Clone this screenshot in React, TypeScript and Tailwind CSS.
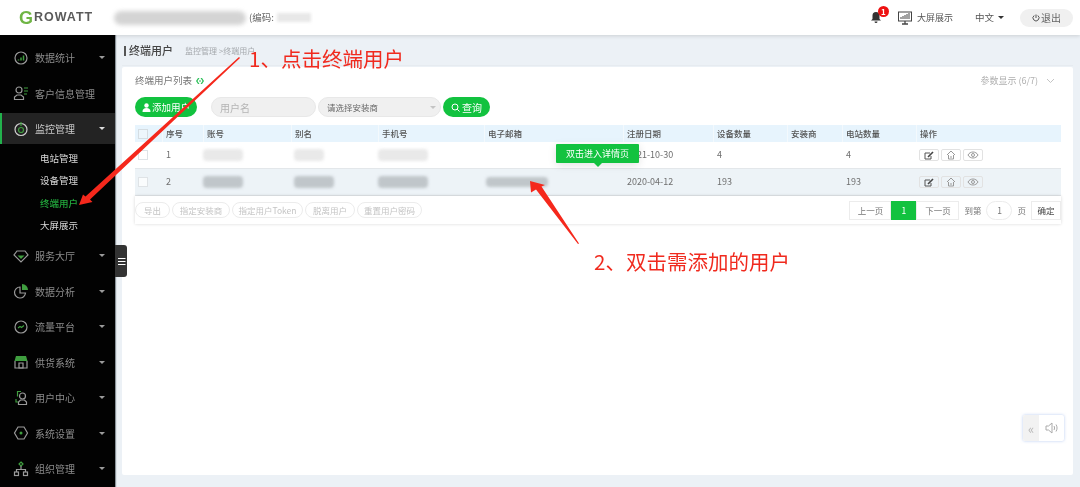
import React from "react";

const G = "#3f9e3f";
const C = "#9a9a9a";

function Icon({ name }: { name: string }) {
  const common = { width: 16, height: 16, viewBox: "0 0 16 16", fill: "none", strokeWidth: 1.2 } as const;
  switch (name) {
    case "stat":
      return <svg {...common}><circle cx="8" cy="8" r="6" stroke={C} /><path d="M5.5 10.5v-1M8 10.5V7.5M10.500 10.5V5.500" stroke={G} strokeWidth="1.500" /></svg>;
    case "cust":
      return <svg {...common}><circle cx="6" cy="5" r="3" stroke={C} /><path d="M1.500 14.500v-2.500l2.500-2h4l2.500 2v2.500z" stroke={C} /><path d="M11 3h4M11 6h4M11 9h3" stroke={G} /></svg>;
    case "mon":
      return <svg {...common}><circle cx="8" cy="8.500" r="6" stroke="#d0d0d0" /><circle cx="8" cy="9" r="2.500" stroke={G} /><path d="M8 1v4" stroke={G} /></svg>;
    case "gem":
      return <svg {...common}><path d="M4 3h8l3 4-7 7-7-7z" stroke={C} /><path d="M4.500 7.500h7L8 11z" fill={G} /></svg>;
    case "pie":
      return <svg {...common}><path d="M7 4a5.500 5.500 0 1 0 5.500 6H7z" stroke={C} /><path d="M9 1a6 6 0 0 1 6 6H9z" fill={G} /></svg>;
    case "flow":
      return <svg {...common}><circle cx="8" cy="8" r="6" stroke={C} /><path d="M5 9l2-1.500 1.500 1L11 6.500" stroke={G} /></svg>;
    case "shop":
      return <svg {...common}><path d="M2 7v7h12V7" stroke={C} /><path d="M3 2h10l1.500 5h-13z" fill={G} /><path d="M6 9h4v5H6z" stroke={C} /></svg>;
    case "user":
      return <svg {...common}><circle cx="9.500" cy="6" r="3" stroke={C} /><path d="M5.500 14.500v-2.500l2-2h4l2 2v2.500z" stroke={C} /><path d="M8 1.500H4.500v5M3 9v3h2" stroke={G} /></svg>;
    case "set":
      return <svg {...common}><path d="M5 2h6l3.500 6-3.500 6H5L1.500 8z" stroke={C} /><circle cx="8" cy="8" r="1.500" fill={G} /></svg>;
    default:
      return <svg {...common}><path d="M8 1l2 2-2 2-2-2z" stroke={G} /><path d="M8 5v3M3.500 11V8.500h9V11" stroke={C} /><rect x="1.500" y="11" width="4" height="3.500" stroke={C} /><rect x="10.500" y="11" width="4" height="3.500" stroke={C} /></svg>;
  }
}

function Caret({ color = "#9a9a9a" }: { color?: string }) {
  return <span className="h-0 w-0 border-x-[3px] border-t-[3px] border-x-transparent" style={{ borderTopColor: color }} />;
}

function Menu({ icon, label, active }: { icon: string; label: string; active?: boolean }) {
  return (
    <div className={active ? "flex h-[31px] items-center border-l-2 border-[#22b14c] bg-[#232323] pl-[11px] pr-[10px]" : "flex h-[35.500px] items-center pl-[13px] pr-[10px]"}>
      <span className="flex w-[22px] shrink-0"><Icon name={icon} /></span>
      <span className={active ? "flex-1 text-[10px] text-[#c8c8c8]" : "flex-1 text-[10px] text-[#8c8c8c]"}>{label}</span>
      {label !== "客户信息管理" && <Caret color={active ? "#ddd" : "#9a9a9a"} />}
    </div>
  );
}

function Sub({ label, on }: { label: string; on?: boolean }) {
  return <div className={on ? "flex h-[22.300px] items-center pl-[40px] text-[9.500px] font-medium text-[#22a93c]" : "flex h-[22.300px] items-center pl-[40px] text-[9.500px] text-[#d8d8d8]"}>{label}</div>;
}

function Blob({ w, h, dark, x = 0 }: { w: number; h: number; dark?: boolean; x?: number }) {
  return <div className={dark ? "rounded-sm bg-[#c0c6ca] blur-[1.500px]" : "rounded-sm bg-[#e9e9e9] blur-[1.500px]"} style={{ width: w, height: h, marginLeft: x }} />;
}

const cols = "grid grid-cols-[27px_41px_88px_87px_106px_139px_90px_74px_55px_74px_145px]";
const heads = ["序号", "账号", "别名", "手机号", "电子邮箱", "注册日期", "设备数量", "安装商", "电站数量", "操作"];

function ActionIcons() {
  const cls = "flex h-[12px] w-[20px] items-center justify-center rounded-[2px] border border-[#e2e2e2]";
  return (
    <div className="flex gap-[2px] pl-[3px]">
      <span className={cls}><svg width="10" height="9" viewBox="0 0 10 9" fill="none"><path d="M1 2h5M1 2v6h6V5" stroke="#555" /><path d="M4 6l5-5" stroke="#444" strokeWidth="1.600" /></svg></span>
      <span className={cls}><svg width="10" height="10" viewBox="0 0 10 10" fill="none" stroke="#999"><path d="M1 5l4-4 4 4M2.500 5v4h5V5M4 7h2" /></svg></span>
      <span className={cls}><svg width="12" height="8" viewBox="0 0 12 8" fill="none" stroke="#999"><path d="M1 4c2-4 8-4 10 0-2 4-8 4-10 0z" /><circle cx="6" cy="4" r="1.500" /></svg></span>
    </div>
  );
}

function Row({ n, date, dev, st, dark, blobs }: { n: string; date: string; dev: string; st: string; dark?: boolean; blobs: number[] }) {
  return (
    <div className={`${cols} h-[27px] items-center border-b border-[#e3e7ea] text-[9px] text-[#6f6f6f] ${dark ? "bg-[#edf3f7]" : "bg-white"}`}>
      <div className="pl-[3px]"><div className="h-[10px] w-[10px] border border-[#dfe3e6] bg-white/70" /></div>
      <div className="pl-[4px]">{n}</div>
      <div><Blob w={blobs[0]} h={12} dark={dark} /></div>
      <div><Blob w={blobs[1]} h={12} dark={dark} x={3} /></div>
      <div><Blob w={blobs[2]} h={12} dark={dark} /></div>
      <div><Blob w={blobs[3]} h={dark ? 10 : 0} dark={dark} x={2} /></div>
      <div className="pl-[4px]">{date}</div>
      <div className="pl-[4px]">{dev}</div>
      <div />
      <div className="pl-[4px]">{st}</div>
      <ActionIcons />
    </div>
  );
}

function Ghost({ label, w }: { label: string; w: number }) {
  return <span className="flex h-[16px] items-center justify-center rounded-full border border-[#ececec] text-[8.500px] text-[#c4c4c4]" style={{ width: w }}>{label}</span>;
}

function PageBtn({ label, w, on }: { label: string; w: number; on?: boolean }) {
  return <span className={on ? "flex h-[19px] items-center justify-center bg-[#12c23f] text-[8.500px] text-white" : "flex h-[19px] items-center justify-center border border-[#ececec] text-[8.500px] text-[#777]"} style={{ width: w }}>{label}</span>;
}

export default function App() {
  return (
    <div className="relative flex h-[487px] w-[1080px] flex-col overflow-hidden bg-[#ecf1f6] font-['Noto_Sans_CJK_SC','Liberation_Sans',sans-serif] blur-[0.3px]">
      <header className="z-10 flex h-[35px] shrink-0 items-center bg-white pl-[19px] pr-[7px] shadow-[0_1px_4px_rgba(0,0,0,0.14)]">
        <span className="flex w-[95px] items-center font-['Liberation_Sans',sans-serif] font-bold leading-none text-[#5a5a5a]">
          <span className="text-[18px] text-[#6fb544]">G</span>
          <span className="ml-[1px] text-[12.500px] tracking-[1px]">ROWATT</span>
        </span>
        <div className="h-[14px] w-[132px] rounded-full bg-[#d4d4d4] blur-[2px]" />
        <span className="ml-[3px] text-[9.500px] text-[#666]">(编码:</span>
        <div className="ml-[3px] h-[9px] w-[34px] bg-[#e8e8e8] blur-[1.500px]" />
        <div className="flex-1" />
        <span className="relative mr-[17px]">
          <svg width="10" height="11" viewBox="0 0 10 11"><path d="M5 0a3.500 3.500 0 0 0-3.500 3.500V7L0 8.500h10L8.500 7V3.500A3.500 3.500 0 0 0 5 0zM3.500 9.500a1.500 1.500 0 0 0 3 0z" fill="#333" /></svg>
          <span className="absolute -right-[8px] -top-[6px] flex h-[11px] w-[11px] items-center justify-center rounded-full bg-[#ee1111] text-[8px] font-bold leading-none text-white">1</span>
        </span>
        <svg width="14" height="14" viewBox="0 0 14 14" fill="none"><rect x="0.500" y="1" width="13" height="9" stroke="#444" /><path d="M3 8V6M5 8V5M7 8V4M9 8V3M11 8V2" stroke="#444" /><path d="M4 13h6M7 10v3" stroke="#444" strokeWidth="1.300" /></svg>
        <span className="ml-[5px] text-[9px] text-[#555]">大屏展示</span>
        <span className="ml-[22px] mr-[4px] text-[9.500px] text-[#555]">中文</span>
        <Caret color="#333" />
        <span className="ml-[16px] flex h-[18px] w-[53px] items-center justify-center gap-[1px] rounded-full bg-[#f0f0f0] text-[10px] text-[#666]">
          <svg width="8" height="8" viewBox="0 0 8 8" fill="none" stroke="#555"><path d="M2.200 1.500a3 3 0 1 0 3.600 0M4 0.500v3.500" /></svg>
          退出
        </span>
      </header>

      <div className="flex min-h-0 flex-1">
        <aside className="flex w-[115px] shrink-0 flex-col overflow-hidden bg-[#020202] pt-[5px] shadow-[1px_0_1px_#8a9298]">
          <Menu icon="stat" label="数据统计" />
          <Menu icon="cust" label="客户信息管理" />
          <div className="h-[2px]" />
          <Menu icon="mon" label="监控管理" active />
          <div className="h-[3px]" />
          <Sub label="电站管理" />
          <Sub label="设备管理" />
          <Sub label="终端用户" on />
          <Sub label="大屏展示" />
          <div className="h-[2px]" />
          <Menu icon="gem" label="服务大厅" />
          <Menu icon="pie" label="数据分析" />
          <Menu icon="flow" label="流量平台" />
          <Menu icon="shop" label="供货系统" />
          <Menu icon="user" label="用户中心" />
          <Menu icon="set" label="系统设置" />
          <Menu icon="org" label="组织管理" />
        </aside>

        <main className="flex min-w-0 flex-1 flex-col px-[7px]">
          <div className="flex h-[31px] shrink-0 items-center border-b border-[#e6ebf0] pl-[2px] pt-[1px]">
            <span className="mr-[3px] h-[10px] w-[2px] bg-[#555]" />
            <span className="text-[11px] font-medium text-[#444]">终端用户</span>
            <span className="ml-[12px] text-[8px] text-[#a5a9ad]">监控管理 &gt;终端用户</span>
          </div>
          <section className="mb-[12px] mt-[1px] flex-1 rounded-[2px] bg-white pl-[13px] pr-[12px] pt-[7px]">
            <div className="flex h-[13px] items-center justify-between">
              <span className="flex items-center gap-[4px] text-[9.500px] text-[#777]">
                终端用户列表
                <svg width="8" height="6" viewBox="0 0 8 6"><path d="M2 0L0 3l2 3h1.500L1.500 3 3.500 0z" fill="#2ec05a" /><path d="M4.500 0l2 3-2 3H6l2-3-2-3zM3.500 2h1v2h-1z" fill="#2ec05a" /></svg>
              </span>
              <span className="flex items-center gap-[8px] pr-[6px] text-[9px] text-[#b0b0b0]">
                参数显示 (6/7)
                <svg width="9" height="6" viewBox="0 0 9 6" fill="none" stroke="#c4c4c4"><path d="M1 1l3.500 3.500L8 1" /></svg>
              </span>
            </div>
            <div className="mt-[10px] flex h-[20px] items-center">
              <span className="flex h-[20px] w-[62px] items-center justify-center gap-[1px] rounded-full bg-[#12c23f] text-[9.500px] text-white">
                <svg width="9" height="9" viewBox="0 0 9 9" fill="#fff"><circle cx="4.500" cy="2.500" r="2.200" /><path d="M0.500 9c0-3 1.500-4 4-4s4 1 4 4z" /></svg>
                添加用户
              </span>
              <span className="ml-[14px] flex h-[20px] w-[105px] items-center rounded-full border border-[#e8e8e8] bg-[#f0f0f0] pl-[8px] text-[10px] text-[#b4b4b4]">用户名</span>
              <span className="ml-[2px] flex h-[20px] w-[123px] items-center justify-between rounded-full border border-[#e8e8e8] bg-[#f0f0f0] pl-[8px] pr-[4px] text-[8.500px] text-[#666]">
                请选择安装商
                <Caret color="#c4c4c4" />
              </span>
              <span className="ml-[2px] flex h-[20px] w-[47px] items-center justify-center gap-[2px] rounded-full bg-[#12c23f] text-[10px] text-white">
                <svg width="9" height="9" viewBox="0 0 9 9" fill="none" stroke="#fff"><circle cx="4" cy="4" r="3" /><path d="M6.200 6.200L8.500 8.500" /></svg>
                查询
              </span>
            </div>
            <div className={`${cols} mt-[8px] h-[17px] items-center bg-[#e7f4fd] text-[8.500px] font-medium text-[#555]`}>
              <div className="pl-[3px]"><div className="h-[10px] w-[10px] border border-[#d5dde2] bg-[#edf6fc]" /></div>
              {heads.map((h) => (
                <div key={h} className="flex h-full items-center border-l border-[#f3f9fd] pl-[3px]">{h}</div>
              ))}
            </div>
            <Row n="1" date="2021-10-30" dev="4" st="4" blobs={[40, 30, 50, 0]} />
            <Row n="2" date="2020-04-12" dev="193" st="193" dark blobs={[40, 40, 50, 62]} />
            <div className="flex h-[28px] items-center justify-between bg-white shadow-[0_0_3px_rgba(0,0,0,0.16)]">
              <div className="flex gap-[2px]">
                <Ghost label="导出" w={35} />
                <Ghost label="指定安装商" w={58} />
                <Ghost label="指定用户Token" w={71} />
                <Ghost label="脱离用户" w={50} />
                <Ghost label="重置用户密码" w={65} />
              </div>
              <div className="flex items-center">
                <PageBtn label="上一页" w={42} />
                <PageBtn label="1" w={25} on />
                <PageBtn label="下一页" w={43} />
                <span className="ml-[5px] text-[8.500px] text-[#777]">到第</span>
                <span className="ml-[5px] flex h-[19px] w-[26px] items-center justify-center rounded-full border border-[#ececec] text-[8.500px] text-[#777]">1</span>
                <span className="ml-[5px] text-[8.500px] text-[#777]">页</span>
                <span className="ml-[5px] flex h-[19px] w-[30px] items-center justify-center border border-[#ececec] text-[8.500px] text-[#444]">确定</span>
              </div>
            </div>
          </section>
        </main>
      </div>

      {/* sidebar toggle */}
      <div className="absolute left-[115px] top-[245px] flex h-[32px] w-[12px] items-center justify-center rounded-r-[3px] bg-[#333]">
        <svg width="9" height="9" viewBox="0 0 9 9" stroke="#fff"><path d="M1 1.500h7.500M1 4.500h7.500M1 7.500h7.500" /></svg>
      </div>

      {/* tooltip */}
      <div className="absolute left-[556px] top-[144px] flex h-[19px] w-[83px] items-center justify-center rounded-[1px] bg-[#12c23f] text-[9px] text-white shadow-[0_2px_8px_rgba(0,0,0,0.12)]">
        双击进入详情页
        <span className="absolute left-[38px] top-[19px] h-0 w-0 border-x-[4px] border-t-[4px] border-x-transparent border-t-[#12c23f]" />
      </div>

      {/* volume widget */}
      <div className="absolute left-[1023px] top-[415px] flex h-[26px] w-[41px] overflow-hidden rounded-[2px] bg-white shadow-[0_0_3px_rgba(110,150,230,0.5)]">
        <span className="flex w-[16px] items-center justify-center bg-[#f2f2f2] text-[13px] leading-none text-[#b8b8b8]">«</span>
        <span className="flex flex-1 items-center justify-center">
          <svg width="14" height="12" viewBox="0 0 14 12" fill="none" stroke="#aaa"><path d="M1 4v4h2.500L7 11V1L3.500 4z" /><path d="M9 4c.7 1.300.7 2.700 0 4M11 2.500c1.400 2.300 1.400 4.700 0 7" /></svg>
        </span>
      </div>

      {/* annotations */}
      <svg className="absolute left-0 top-0" width="1080" height="487" viewBox="0 0 1080 487" fill="#f5281c">
        <path d="M79 205L83 194.500 85.500 196.500 239 57 240 58 90 199.500 92.500 202z" />
        <path d="M530 181L531 192.500 536 189.500 578 244 579 243.500 541.500 186.500 545 185z" />
      </svg>
      <div className="absolute left-[249px] top-[44px] text-[20.500px] leading-[28px] text-[#f02a1e]">1、点击终端用户</div>
      <div className="absolute left-[594px] top-[247px] text-[20.500px] leading-[28px] text-[#f02a1e]">2、双击需添加的用户</div>
    </div>
  );
}
